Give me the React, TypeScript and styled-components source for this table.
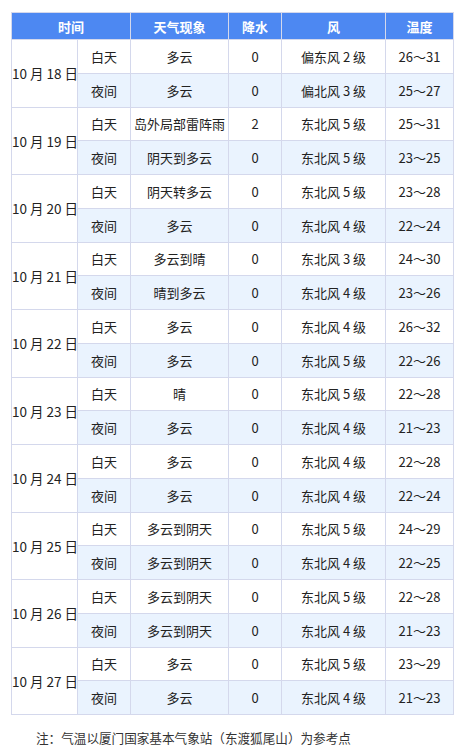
import styled, { createGlobalStyle } from "styled-components";

const GlobalStyle = createGlobalStyle`
  body {
    margin: 0;
    background: #ffffff;
    font-family: "Noto Sans CJK SC", "Noto Sans", sans-serif;
  }
`;

interface Day {
  date: string;
  rows: [Period, Period];
}

interface Period {
  weather: string;
  rain: string;
  wind: string;
  temp: string;
}

const days: Day[] = [
  { date: "10 月 18 日", rows: [
    { weather: "多云", rain: "0", wind: "偏东风 2 级", temp: "26～31" },
    { weather: "多云", rain: "0", wind: "偏北风 3 级", temp: "25～27" },
  ] },
  { date: "10 月 19 日", rows: [
    { weather: "岛外局部雷阵雨", rain: "2", wind: "东北风 5 级", temp: "25～31" },
    { weather: "阴天到多云", rain: "0", wind: "东北风 5 级", temp: "23～25" },
  ] },
  { date: "10 月 20 日", rows: [
    { weather: "阴天转多云", rain: "0", wind: "东北风 5 级", temp: "23～28" },
    { weather: "多云", rain: "0", wind: "东北风 4 级", temp: "22～24" },
  ] },
  { date: "10 月 21 日", rows: [
    { weather: "多云到晴", rain: "0", wind: "东北风 3 级", temp: "24～30" },
    { weather: "晴到多云", rain: "0", wind: "东北风 4 级", temp: "23～26" },
  ] },
  { date: "10 月 22 日", rows: [
    { weather: "多云", rain: "0", wind: "东北风 4 级", temp: "26～32" },
    { weather: "多云", rain: "0", wind: "东北风 5 级", temp: "22～26" },
  ] },
  { date: "10 月 23 日", rows: [
    { weather: "晴", rain: "0", wind: "东北风 5 级", temp: "22～28" },
    { weather: "多云", rain: "0", wind: "东北风 4 级", temp: "21～23" },
  ] },
  { date: "10 月 24 日", rows: [
    { weather: "多云", rain: "0", wind: "东北风 4 级", temp: "22～28" },
    { weather: "多云", rain: "0", wind: "东北风 4 级", temp: "22～24" },
  ] },
  { date: "10 月 25 日", rows: [
    { weather: "多云到阴天", rain: "0", wind: "东北风 5 级", temp: "24～29" },
    { weather: "多云到阴天", rain: "0", wind: "东北风 4 级", temp: "22～25" },
  ] },
  { date: "10 月 26 日", rows: [
    { weather: "多云到阴天", rain: "0", wind: "东北风 5 级", temp: "22～28" },
    { weather: "多云到阴天", rain: "0", wind: "东北风 4 级", temp: "21～23" },
  ] },
  { date: "10 月 27 日", rows: [
    { weather: "多云", rain: "0", wind: "东北风 5 级", temp: "23～29" },
    { weather: "多云", rain: "0", wind: "东北风 4 级", temp: "21～23" },
  ] },
];

const Page = styled.div`
  padding: 12px 15px 0 11px;
`;

const Table = styled.table`
  width: 442px;
  border-collapse: collapse;
  table-layout: fixed;
  font-size: 13px;
  color: #222;
`;

const HeadRow = styled.tr`
  height: 27px;
  background: #4d88f2;
`;

const HeadCell = styled.th`
  border: 1px solid #d4d8ec;
  color: #ffffff;
  font-weight: bold;
  text-align: center;
  padding: 0;
`;

const BodyRow = styled.tr<{ $night: boolean }>`
  height: 33.75px;
  background: ${(p) => (p.$night ? "#eaf3fe" : "#ffffff")};
`;

const Cell = styled.td`
  border: 1px solid #d4d8ec;
  text-align: center;
  padding: 0;
  white-space: nowrap;
`;

const DateCell = styled(Cell)`
  background: #ffffff;
  font-size: 13.5px;
  letter-spacing: 0;
`;

const Note = styled.p`
  margin: 13px 0 0;
  text-indent: 25px;
  font-size: 12.6px;
  color: #333;
`;

export default function App() {
  return (
    <>
      <GlobalStyle />
      <Page>
        <Table>
          <colgroup>
            <col style={{ width: 66 }} />
            <col style={{ width: 53 }} />
            <col style={{ width: 98 }} />
            <col style={{ width: 53 }} />
            <col style={{ width: 104 }} />
            <col style={{ width: 68 }} />
          </colgroup>
          <thead>
            <HeadRow>
              <HeadCell colSpan={2}>时间</HeadCell>
              <HeadCell>天气现象</HeadCell>
              <HeadCell>降水</HeadCell>
              <HeadCell>风</HeadCell>
              <HeadCell>温度</HeadCell>
            </HeadRow>
          </thead>
          <tbody>
            {days.map((d) =>
              d.rows.map((r, i) => (
                <BodyRow key={d.date + i} $night={i === 1}>
                  {i === 0 && <DateCell rowSpan={2}>{d.date}</DateCell>}
                  <Cell>{i === 0 ? "白天" : "夜间"}</Cell>
                  <Cell>{r.weather}</Cell>
                  <Cell>{r.rain}</Cell>
                  <Cell>{r.wind}</Cell>
                  <Cell>{r.temp}</Cell>
                </BodyRow>
              ))
            )}
          </tbody>
        </Table>
        <Note>注：气温以厦门国家基本气象站（东渡狐尾山）为参考点</Note>
      </Page>
    </>
  );
}
